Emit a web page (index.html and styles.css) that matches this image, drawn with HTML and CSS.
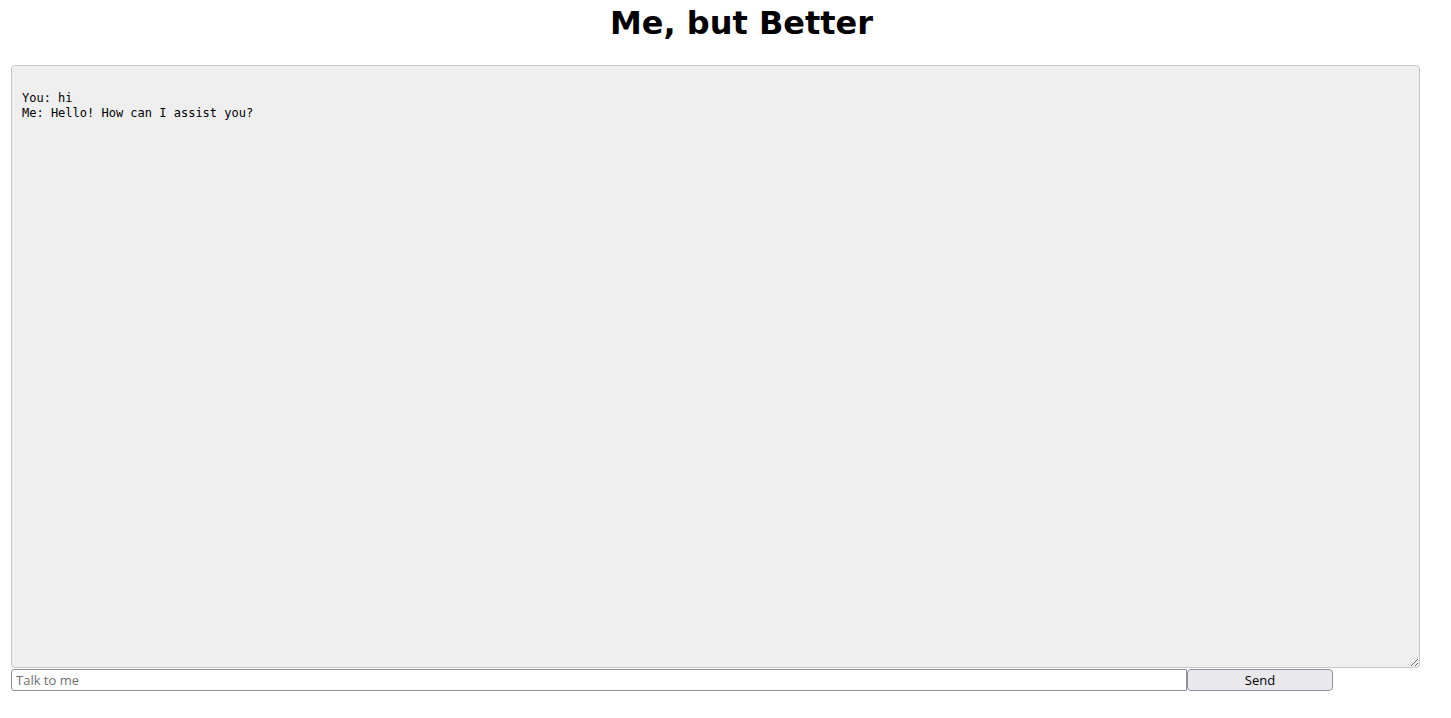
FILE: index.html
```html
<!DOCTYPE html>
<html>
<head>
<meta charset="utf-8">
<title>Me, but Better</title>
<link rel="stylesheet" href="styles.css">
</head>
<body>
<h1 class="title">Me, but Better</h1>
<div class="chat">
<textarea class="log" readonly>

You: hi
Me: Hello! How can I assist you?</textarea>
<form class="composer">
<input class="message" type="text" placeholder="Talk to me">
<button class="send" type="button">Send</button>
</form>
</div>
</body>
</html>
```
FILE: styles.css
```css
html, body {
  margin: 0;
  padding: 0;
  background: #ffffff;
}
body {
  font-family: "DejaVu Sans", sans-serif;
}
.title {
  margin: 5px 0 0;
  padding-left: 32px;
  text-align: center;
  font-family: "DejaVu Sans", sans-serif;
  font-weight: bold;
  font-size: 32px;
  line-height: 37px;
  color: #000;
}
.chat {
  margin: 23px 0 0 11px;
  display: flex;
  flex-direction: column;
  align-items: flex-start;
}
.log {
  box-sizing: border-box;
  width: 1409px;
  height: 603px;
  margin: 0;
  padding: 10px 10px 10px;
  background: #efefef;
  border: 1px solid #c6c6c6;
  border-radius: 4px;
  font-family: "DejaVu Sans Mono", monospace;
  font-size: 12px;
  line-height: 15px;
  color: #000;
  resize: both;
}
.composer {
  display: flex;
  margin: 1px 0 0;
}
.message {
  box-sizing: border-box;
  width: 1176px;
  height: 22px;
  margin: 0;
  padding: 0 4px;
  border: 1px solid #8f8f9d;
  border-radius: 3px 0 0 3px;
  font-family: "Open Sans", "Noto Sans", sans-serif;
  font-size: 13px;
  color: #000;
  background: #fff;
}
.message::placeholder {
  color: #6f6f6f;
}
.send {
  box-sizing: border-box;
  width: 146px;
  height: 22px;
  margin: 0;
  padding: 0;
  border: 1px solid #8f8f9d;
  border-radius: 4px;
  background: #e9e9ed;
  font-family: "Open Sans", "Noto Sans", sans-serif;
  font-size: 13px;
  color: #000;
}
```
